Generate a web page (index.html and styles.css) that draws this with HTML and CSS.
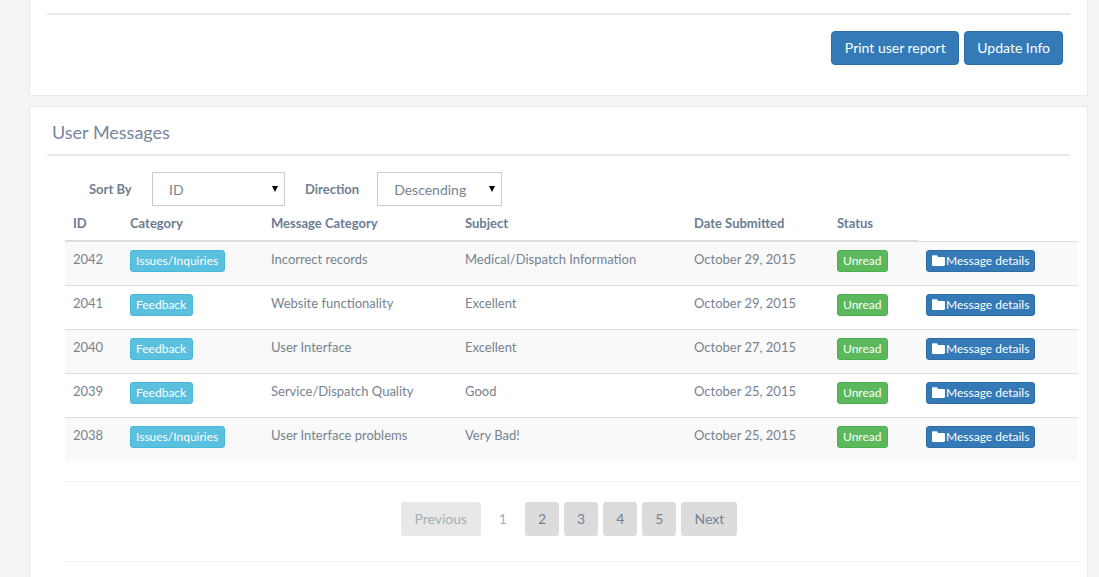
FILE: index.html
```html
<!DOCTYPE html>
<html lang="en">
<head>
  <meta charset="UTF-8">
  <meta name="viewport" content="width=device-width, initial-scale=1.0">
  <title>User Messages</title>
  <link rel="stylesheet" href="styles.css">
</head>
<body>

<svg class="icon-defs" width="0" height="0">
  <symbol id="folder" viewBox="0 0 16 14">
    <path d="M1.5 0h4.2c.7 0 1.2.5 1.3 1.200l.1.800h7.400c.8 0 1.500.7 1.500 1.500v8c0 .8-.7 1.500-1.500 1.500h-13C.7 13.500 0 12.800 0 12V1.500C0 .7.700 0 1.500 0z"/>
  </symbol>
</svg>

<div class="panel panel-top">
  <hr class="rule">
  <div class="actions">
    <button class="btn btn-wide">Print user report</button>
    <button class="btn">Update Info</button>
  </div>
</div>

<div class="panel panel-messages">
  <h3 class="panel-title">User Messages</h3>
  <hr class="rule">

  <div class="sort-form">
    <label class="sort-label sort-label-first" for="sortBy">Sort By</label>
    <span class="select-wrap select-sort">
      <select id="sortBy"><option>ID</option></select>
    </span>
    <label class="sort-label sort-label-second" for="direction">Direction</label>
    <span class="select-wrap select-direction">
      <select id="direction"><option>Descending</option></select>
    </span>
  </div>

  <div class="table-area">
    <table class="messages">
      <colgroup>
        <col class="col-id"><col class="col-category"><col class="col-type">
        <col class="col-subject"><col class="col-date"><col class="col-status"><col class="col-action">
      </colgroup>
      <thead>
        <tr>
          <th>ID</th>
          <th>Category</th>
          <th>Message Category</th>
          <th>Subject</th>
          <th>Date Submitted</th>
          <th>Status</th>
        </tr>
      </thead>
      <tbody>
        <tr>
          <td>2042</td>
          <td><span class="label label-info">Issues/Inquiries</span></td>
          <td>Incorrect records</td>
          <td>Medical/Dispatch Information</td>
          <td>October 29, 2015</td>
          <td><span class="label label-success">Unread</span></td>
          <td><a class="label label-primary" href="#"><svg class="folder"><use href="#folder"/></svg>Message details</a></td>
        </tr>
        <tr>
          <td>2041</td>
          <td><span class="label label-info">Feedback</span></td>
          <td>Website functionality</td>
          <td>Excellent</td>
          <td>October 29, 2015</td>
          <td><span class="label label-success">Unread</span></td>
          <td><a class="label label-primary" href="#"><svg class="folder"><use href="#folder"/></svg>Message details</a></td>
        </tr>
        <tr>
          <td>2040</td>
          <td><span class="label label-info">Feedback</span></td>
          <td>User Interface</td>
          <td>Excellent</td>
          <td>October 27, 2015</td>
          <td><span class="label label-success">Unread</span></td>
          <td><a class="label label-primary" href="#"><svg class="folder"><use href="#folder"/></svg>Message details</a></td>
        </tr>
        <tr>
          <td>2039</td>
          <td><span class="label label-info">Feedback</span></td>
          <td>Service/Dispatch Quality</td>
          <td>Good</td>
          <td>October 25, 2015</td>
          <td><span class="label label-success">Unread</span></td>
          <td><a class="label label-primary" href="#"><svg class="folder"><use href="#folder"/></svg>Message details</a></td>
        </tr>
        <tr>
          <td>2038</td>
          <td><span class="label label-info">Issues/Inquiries</span></td>
          <td>User Interface problems</td>
          <td>Very Bad!</td>
          <td>October 25, 2015</td>
          <td><span class="label label-success">Unread</span></td>
          <td><a class="label label-primary" href="#"><svg class="folder"><use href="#folder"/></svg>Message details</a></td>
        </tr>
      </tbody>
    </table>

    <hr class="thin-rule">

    <div class="pagination">
      <span class="page page-disabled">Previous</span>
      <span class="page page-current">1</span>
      <a class="page" href="#">2</a>
      <a class="page" href="#">3</a>
      <a class="page" href="#">4</a>
      <a class="page" href="#">5</a>
      <a class="page" href="#">Next</a>
    </div>

    <hr class="thin-rule thin-rule-last">
  </div>
</div>

</body>
</html>
```

FILE: styles.css
```css
html, body {
  height: 577px;
  overflow: hidden;
}
body {
  margin: 0;
  padding: 0 11px 0 29px;
  background-color: #f5f5f5;
  font-family: Lato, "Open Sans", sans-serif;
  font-size: 14px;
  line-height: 20px;
  color: #76838f;
}
.icon-defs {
  position: absolute;
}
.panel {
  background-color: #fff;
  border: 1px solid #e8eaec;
  padding: 0 17px;
}
.panel-top {
  border-top: 0;
  box-sizing: border-box;
  height: 96px;
  padding-top: 13px;
}
.panel-messages {
  margin-top: 10px;
  border-bottom: 0;
  height: 470px;
}
.rule {
  height: 2px;
  margin: 0;
  border: 0;
  background-color: #e7eaec;
}
.actions {
  display: flex;
  justify-content: flex-end;
  gap: 5px;
  padding: 16px 7px 0 0;
}
.btn {
  height: 34px;
  padding: 0 12px 2px;
  border: 1px solid #2e6da4;
  border-radius: 4px;
  background-color: #337ab7;
  color: #fff;
  font-family: inherit;
  font-size: 14px;
}
.btn-wide {
  width: 128px;
  padding-left: 0;
  padding-right: 0;
}
.panel-title {
  margin: 0;
  padding: 14px 0 0 5px;
  height: 33px;
  font-size: 18px;
  font-weight: 400;
  line-height: 22px;
  color: #76869c;
}
.sort-form {
  display: flex;
  align-items: center;
  padding-top: 16px;
  height: 34px;
}
.sort-label {
  font-size: 13px;
  font-weight: 700;
  color: #72808f;
}
.sort-label-first {
  margin-left: 42px;
  width: 63px;
}
.sort-label-second {
  margin: 0 18px 0 20px;
}
.select-wrap {
  position: relative;
  display: block;
  height: 34px;
}
.select-wrap::after {
  content: "";
  position: absolute;
  top: 14px;
  right: 7px;
  border-style: solid;
  border-width: 6px 3px 0;
  border-color: #000 transparent transparent;
}
.select-sort {
  width: 133px;
}
.select-direction {
  width: 125px;
}
select {
  appearance: none;
  width: 100%;
  height: 34px;
  padding: 0 0 0 16px;
  border: 1px solid #ccc;
  border-radius: 0;
  background-color: #fff;
  font-family: inherit;
  font-size: 14px;
  color: #76838f;
}
.table-area {
  margin: 0 -8px 0 18px;
}
.messages {
  width: 1013px;
  table-layout: fixed;
  border-collapse: collapse;
}
.col-id { width: 57px; }
.col-category { width: 141px; }
.col-type { width: 194px; }
.col-subject { width: 229px; }
.col-date { width: 143px; }
.col-status { width: 89px; }
.col-action { width: 160px; }
.messages th {
  padding: 7px 8px;
  border-bottom: 2px solid #ddd;
  font-size: 13px;
  font-weight: 700;
  text-align: left;
  color: #6c7c93;
}
.messages td {
  height: 44px;
  box-sizing: border-box;
  padding: 7px 8px;
  border-top: 1px solid #ddd;
  vertical-align: top;
  font-size: 13px;
  white-space: nowrap;
}
.messages tbody tr:nth-child(odd) {
  background-color: #f9f9f9;
}
.label {
  display: inline-block;
  height: 22px;
  box-sizing: border-box;
  margin-top: 1px;
  padding: 0 6px 0 5px;
  border: 1px solid transparent;
  border-radius: 3px;
  color: #fff;
  font-size: 12px;
  line-height: 20px;
  text-decoration: none;
}
.label-info {
  background-color: #5bc0de;
  border-color: #46b8da;
}
.label-success {
  background-color: #5cb85c;
  border-color: #4cae4c;
}
.label-primary {
  padding-right: 5px;
  background-color: #337ab7;
  border-color: #2e6da4;
}
.folder {
  width: 13px;
  height: 12px;
  margin-right: 1px;
  vertical-align: -2px;
  fill: #fff;
}
.thin-rule {
  height: 1px;
  margin: 20px 0;
  border: 0;
  background-color: #eee;
}
.thin-rule-last {
  margin-top: 25px;
}
.pagination {
  display: flex;
  justify-content: center;
  gap: 5px;
  padding-right: 5px;
}
.page {
  min-width: 34px;
  height: 34px;
  box-sizing: border-box;
  padding: 0 13px;
  border-radius: 3px;
  background-color: #dcdcdc;
  font-size: 14px;
  line-height: 34px;
  text-align: center;
  text-decoration: none;
  color: #72819a;
}
.page-disabled {
  min-width: 80px;
  background-color: #e8e8e8;
  color: #a3afb7;
}
.page-current {
  background-color: transparent;
  color: #a3afb7;
}
```
